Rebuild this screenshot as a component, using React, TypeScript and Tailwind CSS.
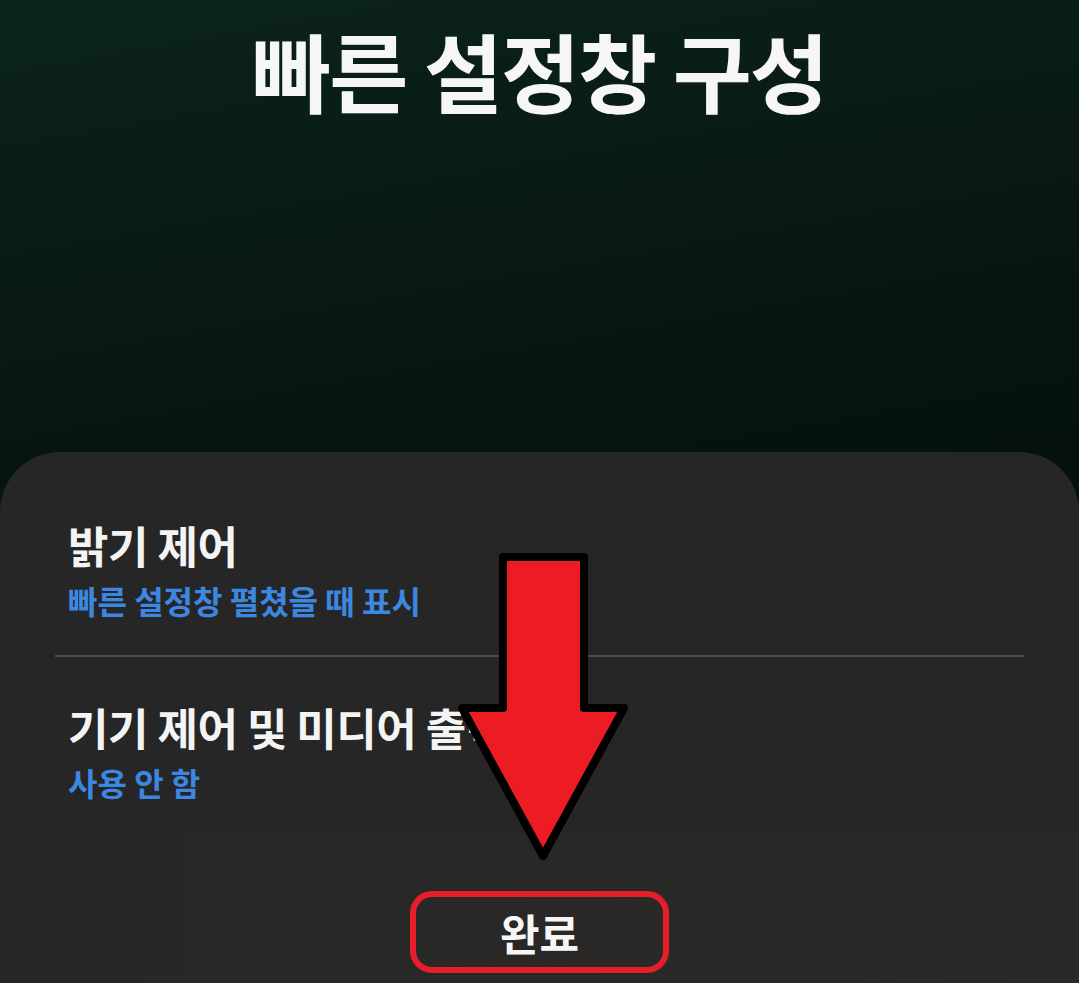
const font = { fontFamily: '"Noto Sans CJK KR", "Noto Sans", sans-serif' };

function Arrow() {
  return (
    <svg
      className="pointer-events-none absolute left-0 top-0"
      width={1079}
      height={983}
      viewBox="0 0 1079 983"
    >
      <path
        d="M503 557 L584 557 L584 708 L624 708 L543 856 L462 708 L503 708 Z"
        fill="#ed1c24"
        stroke="#000"
        strokeWidth={8}
        strokeLinejoin="round"
      />
    </svg>
  );
}

function SettingRow({ title, value }: { title: string; value: string }) {
  return (
    <div className="flex flex-col">
      <span className="text-[44px] font-bold leading-none tracking-[-0.5px] text-[#f4f4f4]">
        {title}
      </span>
      <span className="mt-[17px] text-[32px] font-bold leading-none text-[#3d87e0]">
        {value}
      </span>
    </div>
  );
}

export default function App() {
  return (
    <div
      className="relative flex h-[983px] w-[1079px] flex-col overflow-hidden bg-[linear-gradient(170deg,#0c231e_0%,#07150f_40%,#020505_100%)]"
      style={font}
    >
      <header className="flex h-[452px] shrink-0 justify-center pt-[27px]">
        <h1 className="text-[86px] font-bold leading-none tracking-[-2px] text-[#f6f6f6]">
          빠른 설정창 구성
        </h1>
      </header>

      <section className="flex flex-1 flex-col rounded-t-[60px] bg-[#262626]">
        <div className="px-[68px] pt-[71px]">
          <SettingRow title="밝기 제어" value="빠른 설정창 펼쳤을 때 표시" />
        </div>
        <div className="mx-[55px] mt-[39px] h-[2px] bg-[#4b4b4b]" />
        <div className="px-[68px] pt-[48px]">
          <SettingRow title="기기 제어 및 미디어 출력" value="사용 안 함" />
        </div>

        <footer className="mt-auto flex h-[151px] justify-center bg-[linear-gradient(90deg,#272727_0%,#292827_55%,#27292a_100%)] pt-[59px]">
          <button className="flex h-[82px] w-[259px] items-center justify-center rounded-[22px] border-[6px] border-[#e61e2a] text-[43px] font-bold leading-none text-[#f6f6f6]">
            완료
          </button>
        </footer>
      </section>

      <Arrow />
    </div>
  );
}
